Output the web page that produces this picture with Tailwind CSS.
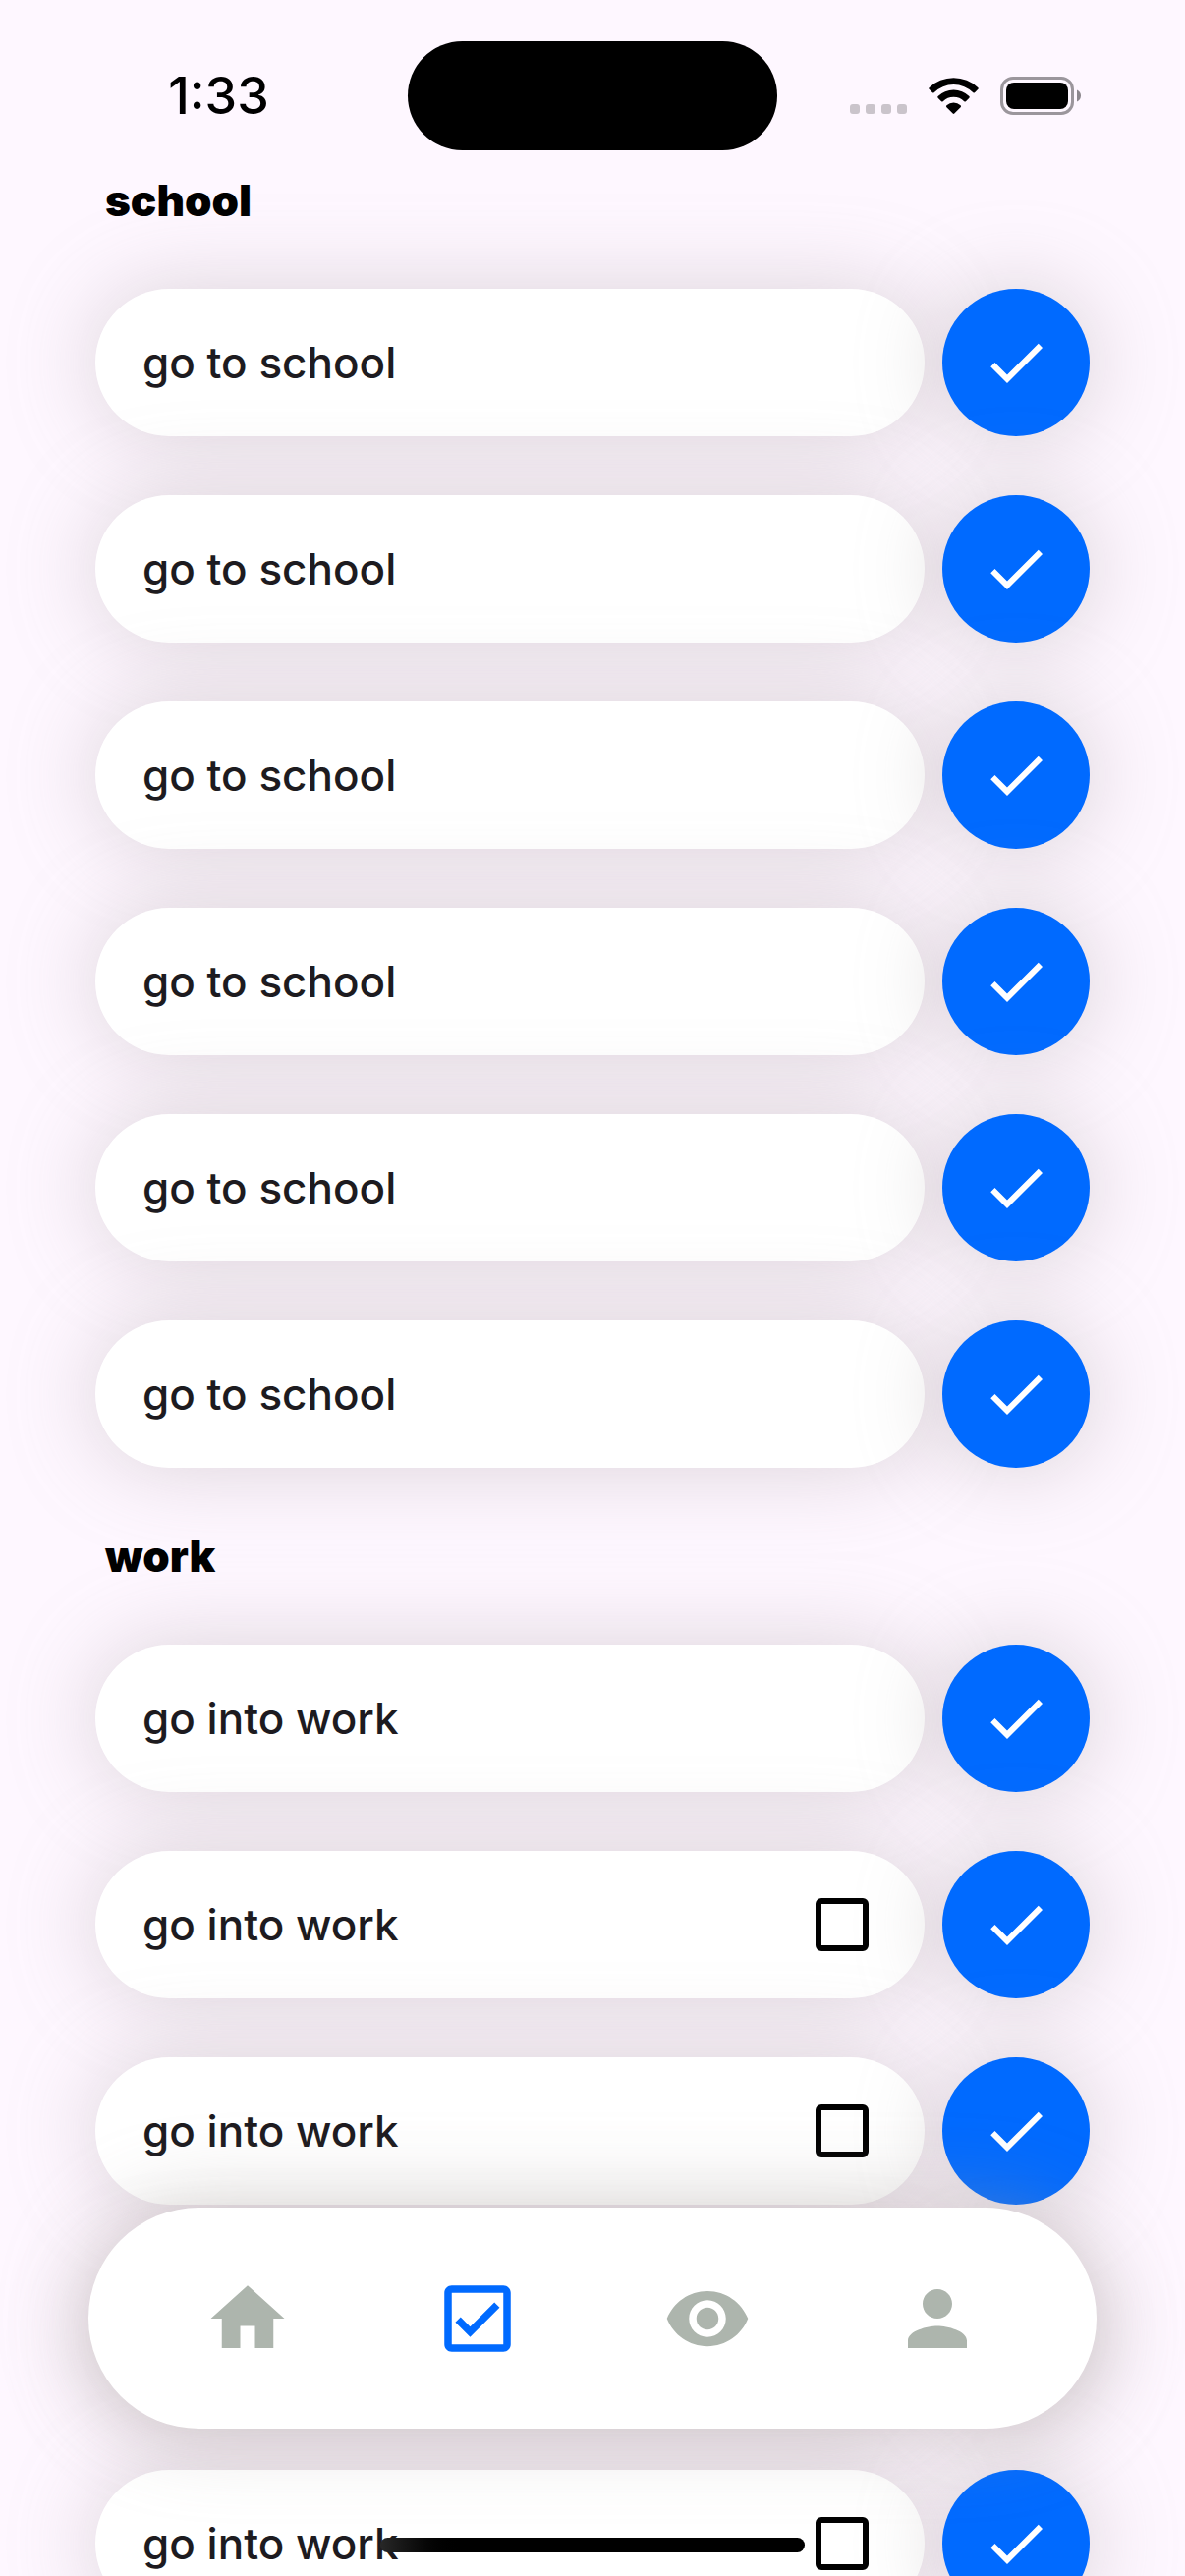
<!DOCTYPE html>
<html lang="en">
<head>
<meta charset="utf-8">
<meta name="viewport" content="width=device-width, initial-scale=1">
<title>Tasks</title>
<script src="https://cdn.jsdelivr.net/npm/@tailwindcss/browser@4"></script>
</head>
<body class="relative h-screen overflow-hidden bg-[#fef7ff] font-['Inter','Noto_Sans',sans-serif] text-[#1d1b20]">

<div class="h-full overflow-y-auto [scrollbar-width:none]">
  <!-- Status bar -->
  <header class="sticky top-0 z-10 grid h-[174px] grid-cols-[1fr_376px_1fr] items-start pt-[42px] text-black">
    <div class="flex h-[111px] items-center justify-center pl-[30px]">
      <time class="text-[52px] leading-[60px] font-medium">1:33</time>
    </div>
    <div class="h-[111px] rounded-[56px] bg-black"></div>
    <div class="flex h-[111px] items-center justify-center gap-[22px] pr-8">
      <svg class="h-[39px] w-[58px]" viewBox="0 0 58 39" fill="#cac4cb" aria-hidden="true">
        <rect x="0" y="28" width="10" height="10" rx="3"/><rect x="16" y="28" width="10" height="10" rx="3"/><rect x="32" y="28" width="10" height="10" rx="3"/><rect x="48" y="28" width="10" height="10" rx="3"/>
      </svg>
      <svg class="h-[39px] w-[51px]" viewBox="0 0 51 39" aria-hidden="true">
        <path d="M.6 11.2A36 36 0 0 1 50.4 11.2Q51.2 12 50.4 12.8L47 16.2Q46.2 17 45.4 16.2A28.500 28.500 0 0 0 5.600 16.200Q4.800 17 4 16.200L.6 12.800Q-.2 12 .6 11.200Z"/>
        <path d="M9.600 20A23 23 0 0 1 41.400 20Q42.200 20.900 41.400 21.700L37.900 25.200Q37.100 26 36.300 25.200A15.500 15.500 0 0 0 14.700 25.200Q13.900 26 13.100 25.200L9.600 21.700Q8.800 20.900 9.600 20Z"/>
        <path d="M18.400 29.200A11 11 0 0 1 32.600 29.200Q33.600 30.200 32.600 31.200L26.300 37.600Q25.500 38.400 24.700 37.600L18.400 31.200Q17.400 30.200 18.400 29.200Z"/>
      </svg>
      <svg class="h-[39px] w-[82px]" viewBox="0 0 82 39" aria-hidden="true">
        <rect x="1.500" y="1.500" width="72" height="36" rx="11.500" fill="none" stroke="#9b969c" stroke-width="3"/>
        <rect x="6" y="6" width="63" height="27" rx="8"/>
        <path d="M78 13.500C80.400 14.500 82 16.600 82 19.500S80.400 24.500 78 25.500Z" fill="#8c878d"/>
      </svg>
    </div>
  </header>

  <main class="flex flex-col gap-[60px] px-[97px] pb-[420px]">
    <section class="flex flex-col gap-[60px]">
      <h2 class="px-[10px] text-[44px] leading-[60px] font-black text-black">school</h2>
      <ul class="flex flex-col gap-[60px]" data-task="go to school" data-boxes="0,0,0,0,0,0"></ul>
    </section>
    <section class="flex flex-col gap-[60px]">
      <h2 class="px-[10px] text-[44px] leading-[60px] font-black text-black">work</h2>
      <ul class="flex flex-col gap-[60px]" data-task="go into work" data-boxes="0,1,1,1,1"></ul>
    </section>
  </main>
</div>

<template id="task">
  <li class="flex gap-[18px]">
    <div class="flex h-[150px] flex-1 items-center justify-between rounded-full bg-white pr-[57px] pl-12 shadow-[0_0_88px_rgba(162,153,155,0.38)]">
      <label class="text-[44px] leading-[60px] font-medium"></label>
      <input type="checkbox" class="size-[54px] appearance-none rounded-[6px] border-6 border-black">
    </div>
    <button type="button" aria-label="Complete task" class="flex size-[150px] items-center justify-center rounded-full bg-[#006aff] shadow-[0_0_88px_rgba(162,153,155,0.42)]">
      <svg class="size-[72px]" viewBox="0 0 24 24" fill="#fff" aria-hidden="true"><path d="M9 16.170L4.830 12l-1.420 1.410L9 19 21 7l-1.410-1.410z"/></svg>
    </button>
  </li>
</template>

<!-- Floating navigation -->
<nav class="absolute inset-x-[90px] bottom-[150px] grid h-[225px] grid-cols-4 place-items-center rounded-full bg-white px-[45px] text-[#adb5ad] shadow-[0_0_88px_rgba(162,153,148,0.46)]">
  <a href="#home" aria-label="Home"><svg class="size-[90px]" viewBox="0 0 24 24" fill="currentColor"><path d="M10 20v-6h4v6h5v-8h3L12 3 2 12h3v8z"/></svg></a>
  <a href="#tasks" aria-label="Tasks" aria-current="page" class="text-[#006aff]"><svg class="size-[90px]" viewBox="0 0 24 24" fill="currentColor"><path d="M19 3H5c-1.100 0-2 .9-2 2v14c0 1.100.9 2 2 2h14c1.100 0 2-.9 2-2V5c0-1.100-.9-2-2-2zm0 16H5V5h14v14zM17.990 9l-1.410-1.420-6.590 6.590-2.580-2.570-1.420 1.410 4 3.990z"/></svg></a>
  <a href="#watch" aria-label="Watch"><svg class="size-[90px]" viewBox="0 0 24 24" fill="currentColor"><path d="M12 4.500C7 4.500 2.730 7.610 1 12c1.730 4.390 6 7.500 11 7.500s9.270-3.110 11-7.500c-1.730-4.390-6-7.500-11-7.500zM12 17c-2.760 0-5-2.240-5-5s2.240-5 5-5 5 2.240 5 5-2.240 5-5 5zm0-8c-1.660 0-3 1.340-3 3s1.340 3 3 3 3-1.340 3-3-1.340-3-3-3z"/></svg></a>
  <a href="#profile" aria-label="Profile"><svg class="size-[90px]" viewBox="0 0 24 24" fill="currentColor"><path d="M12 12c2.210 0 4-1.790 4-4s-1.790-4-4-4-4 1.790-4 4 1.790 4 4 4zm0 2c-2.670 0-8 1.340-8 4v2h16v-2c0-2.660-5.330-4-8-4z"/></svg></a>
</nav>

<!-- Home indicator -->
<div class="absolute inset-x-0 bottom-6 flex justify-center">
  <div class="h-[15px] w-[432px] rounded-full bg-linear-to-r from-[#282828] to-black to-20%"></div>
</div>

<script>
  const template = document.getElementById('task');
  let count = 0;
  document.querySelectorAll('ul[data-task]').forEach(list => {
    list.dataset.boxes.split(',').forEach(hasBox => {
      const row = template.content.cloneNode(true);
      const label = row.querySelector('label');
      const box = row.querySelector('input');
      label.textContent = list.dataset.task;
      if (hasBox === '1') {
        box.id = 'task-' + (++count);
        label.htmlFor = box.id;
      } else {
        const name = document.createElement('span');
        name.className = label.className;
        name.textContent = label.textContent;
        label.replaceWith(name);
        box.remove();
      }
      list.append(row);
    });
  });
</script>
</body>
</html>
